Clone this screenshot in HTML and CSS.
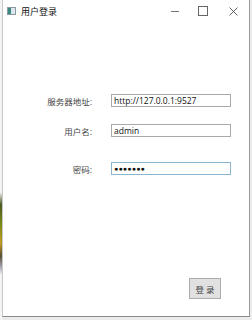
FILE: index.html
```html
<!DOCTYPE html>
<html lang="zh-CN">
<head>
  <meta charset="UTF-8" />
  <title>用户登录</title>
  <link rel="stylesheet" href="styles.css">
</head>
<body>
  <div class="desk"></div>
  <div class="window">
    <div class="titlebar">
      <span class="app-icon"></span>
      <span class="title">用户登录</span>
      <div class="controls">
        <span class="ctl min"></span>
        <span class="ctl max"></span>
        <span class="ctl close">
          <svg width="9" height="9" viewBox="0 0 9 9"><path d="M0.5 0.5 L8.5 8.5 M8.5 0.5 L0.5 8.5" stroke="#555" stroke-width="0.9"/></svg>
        </span>
      </div>
    </div>

    <div class="form">
      <div class="row r1">
        <label>服务器地址:</label>
        <div class="field">http://127.0.0.1:9527</div>
      </div>
      <div class="row r2">
        <label>用户名:</label>
        <div class="field">admin</div>
      </div>
      <div class="row r3">
        <label>密码:</label>
        <div class="field focus"><span class="dots">●●●●●●●</span></div>
      </div>
    </div>

    <div class="footer">
      <button class="login">登 录</button>
    </div>
  </div>
</body>
</html>
```

FILE: styles.css
```css
* { margin: 0; padding: 0; box-sizing: border-box; }
html, body { width: 252px; height: 320px; overflow: hidden; }
body {
  background: #ececec;
  font-family: "Noto Sans", "Noto Sans CJK SC", sans-serif;
  color: #222;
  display: flex;
}
.desk {
  width: 2px;
  height: 320px;
  background: linear-gradient(#f4f4f4 0, #f4f4f4 60%, #4a5a20 64%, #7a8a18 70%, #c09a20 76%, #5a5030 80%, #9a9aa8 83%, #f4f4f4 86%);
}
.window {
  width: 248px;
  height: 317px;
  background: #fff;
  border-left: 1px solid #c8c8c8;
  border-right: 1px solid #9a9a9a;
  border-bottom: 1px solid #8a8a8a;
  display: flex;
  flex-direction: column;
}
.titlebar {
  height: 22px;
  display: flex;
  align-items: center;
  padding-left: 4px;
}
.app-icon {
  width: 9px; height: 8px;
  border: 1px solid #8a9aa0;
  background: linear-gradient(90deg, #3a8a80 0, #3a8a80 40%, #dde8ec 40%);
}
.title { font-size: 9px; margin-left: 5px; color: #111; }
.controls { margin-left: auto; display: flex; align-items: center; height: 22px; }
.ctl { width: 28px; display: flex; justify-content: center; align-items: center; height: 22px; }
.min::before { content: ''; width: 8px; height: 1px; background: #777; }
.max::before { content: ''; width: 8px; height: 8px; border: 1px solid #666; }
.close { width: 32px; }

.form { padding-top: 72px; }
.row { display: flex; align-items: center; height: 13px; }
.r2 { margin-top: 17px; }
.r3 { margin-top: 25px; }
.row label {
  width: 92px;
  text-align: right;
  font-size: 8.5px;
  color: #444;
  padding-right: 3px;
}
.field {
  margin-left: 16px;
  width: 120px;
  height: 13px;
  border: 1px solid #a9a9a9;
  font-size: 8.5px;
  line-height: 11px;
  padding-left: 2px;
  color: #111;
  font-family: "Open Sans", "Noto Sans", sans-serif;
}
.field.focus { border-color: #8ab4d0; }
.dots { font-size: 7px; letter-spacing: 0.2px; vertical-align: top; line-height: 11px; }

.footer { margin-top: auto; display: flex; justify-content: flex-end; padding: 0 28px 17px 0; }
.login {
  width: 32px; height: 21px;
  background: #e1e1e1;
  border: 1px solid #adadad;
  font-family: "Noto Sans CJK SC", sans-serif;
  font-size: 8.5px;
  color: #444;
}
```
